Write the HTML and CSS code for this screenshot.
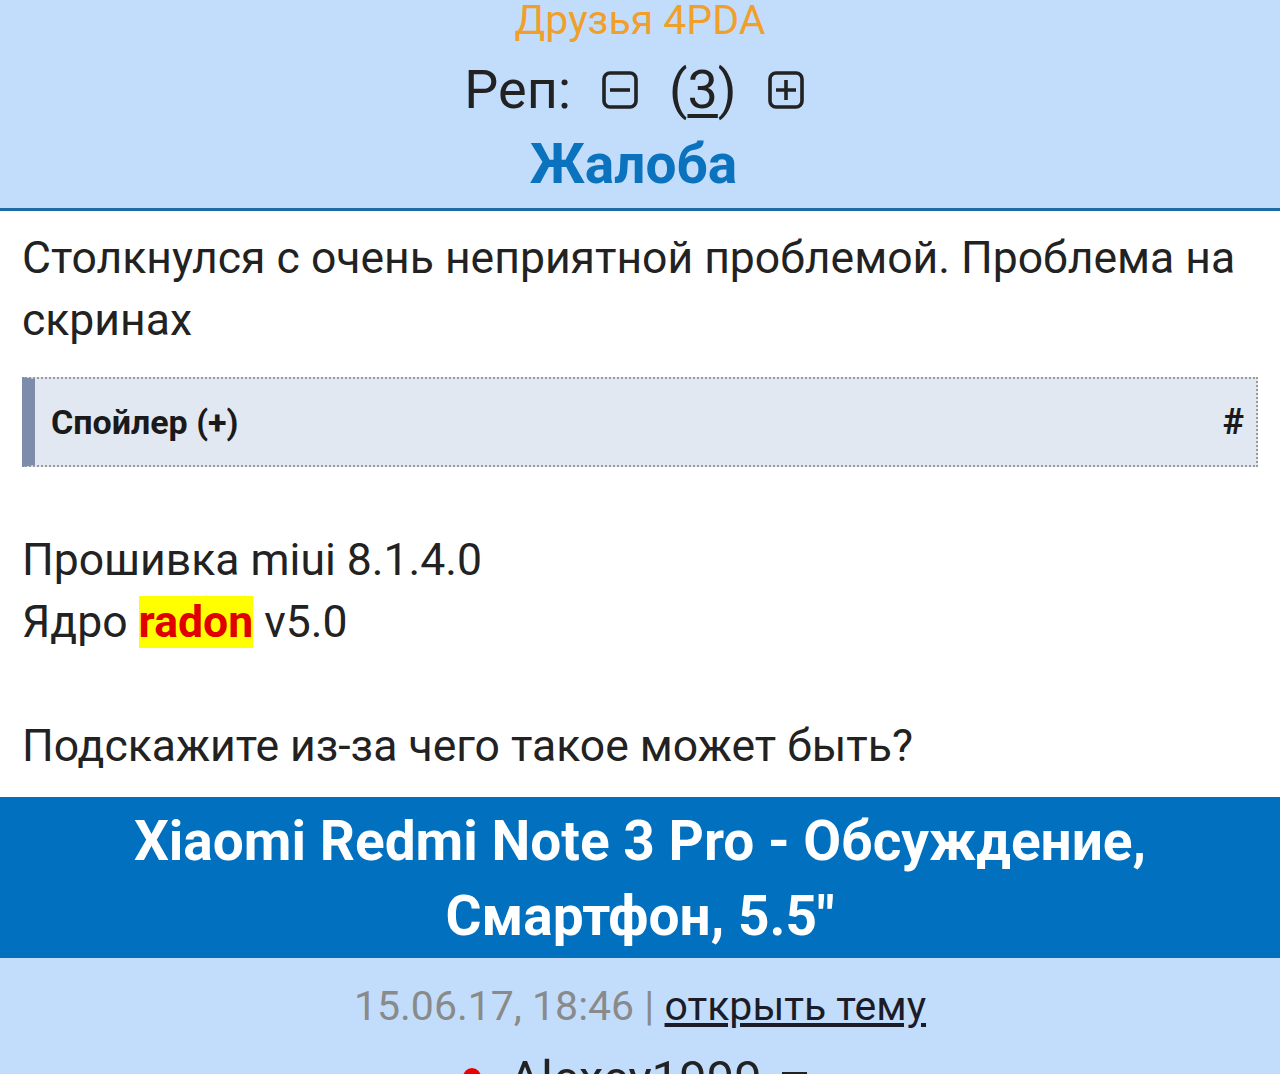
FILE: index.html
```html
<!DOCTYPE html>
<html lang="ru">
  <head>
    <meta charset="UTF-8" />
    <meta name="viewport" content="width=device-width, initial-scale=1.0" />
    <title>4PDA - Xiaomi Redmi Note 3 Pro</title>
    <link rel="stylesheet" href="styles.css">
  </head>
  <body>
    <div class="post-head">
      <div class="group">Друзья 4PDA</div>
      <div class="rep">
        <span>Реп:</span>
        <a class="rep-btn" href="#">
          <svg viewBox="0 0 36 38" width="36" height="38">
            <rect x="2" y="2" width="32" height="34" rx="6" fill="none" stroke="#222" stroke-width="3.6" />
            <path d="M8 19h20" stroke="#222" stroke-width="3.6" />
          </svg>
        </a>
        <span>(<a class="rep-num" href="#">3</a>)</span>
        <a class="rep-btn" href="#">
          <svg viewBox="0 0 36 38" width="36" height="38">
            <rect x="2" y="2" width="32" height="34" rx="6" fill="none" stroke="#222" stroke-width="3.6" />
            <path d="M8 19h20M18 9v20" stroke="#222" stroke-width="3.6" />
          </svg>
        </a>
      </div>
      <a class="report" href="#">Жалоба</a>
    </div>

    <div class="post-body">
      <p>Столкнулся с очень неприятной проблемой. Проблема на скринах</p>
      <div class="spoiler">
        <span class="spoiler-title">Спойлер (+)</span>
        <span class="spoiler-anchor">#</span>
      </div>
      <br />
      <p>
        Прошивка miui 8.1.4.0<br />
        Ядро <b class="mark">radon</b> v5.0<br />
        <br />
        Подскажите из-за чего такое может быть?
      </p>
    </div>

    <div class="topic-title">Xiaomi Redmi Note 3 Pro - Обсуждение, Смартфон, 5.5"</div>

    <div class="topic-meta">
      <div class="when"><span class="date">15.06.17, 18:46 |</span> <a href="#">открыть тему</a></div>
      <div class="author">
        <span class="dot"></span>Alexey1999
        <svg class="menu" viewBox="0 0 25 23" width="25" height="23">
          <path d="M0 2h25M0 11.5h25M0 21h25" stroke="#222" stroke-width="4" />
        </svg>
      </div>
    </div>
  </body>
</html>
```

FILE: styles.css
```css
* {
  box-sizing: border-box;
  margin: 0;
  padding: 0;
}
body {
  font-family: Roboto, "Noto Sans", sans-serif;
  color: #222;
  background: #fff;
  font-size: 44.5px;
  overflow: hidden;
}
a {
  color: inherit;
}
.post-head {
  margin-top: -12px;
  background-color: #c2ddfb;
  border-bottom: 3px solid #1d6aa5;
  text-align: center;
  padding-bottom: 7px;
}
.group {
  color: #f0a02a;
  font-size: 41px;
  line-height: 65px;
}
.rep {
  font-size: 54px;
  line-height: 74px;
  display: flex;
  justify-content: center;
  align-items: center;
  gap: 31px;
  padding-right: 12px;
}
.rep-btn {
  display: inline-flex;
}
.rep-num {
  text-decoration: underline;
  text-decoration-thickness: 4px;
  text-underline-offset: 6px;
}
.report {
  display: block;
  font-weight: bold;
  color: #0b72bd;
  text-decoration: none;
  font-size: 55px;
  line-height: 74px;
  padding-right: 13px;
}
.post-body {
  padding: 16px 22px 20px 22px;
  line-height: 62px;
}
.spoiler {
  margin-top: 26px;
  height: 90px;
  display: flex;
  justify-content: space-between;
  align-items: center;
  background-color: #e2e8f1;
  border: 2px dotted #9a9a9a;
  border-left: 13px solid #7d8cab;
  padding: 0 12px 0 16px;
  font-size: 34px;
  font-weight: bold;
  color: #1a1a1a;
}
.spoiler-anchor {
  font-size: 36px;
}
.mark {
  background-color: #ffff00;
  color: #e00000;
}
.topic-title {
  background-color: #0070bf;
  color: #fff;
  font-weight: bold;
  font-size: 55px;
  line-height: 75px;
  text-align: center;
  padding: 7px 100px 4px 100px;
}
.topic-meta {
  background-color: #c2ddfb;
  text-align: center;
  padding-top: 11px;
  line-height: 74px;
  font-size: 41px;
}
.date {
  color: #8a8a8a;
}
.when a {
  color: #1c1c28;
}
.author {
  font-size: 49px;
  line-height: 72px;
  padding-right: 10px;
}
.dot {
  display: inline-block;
  width: 18px;
  height: 18px;
  border-radius: 50%;
  background: #e00;
  margin-right: 28px;
  vertical-align: 9px;
}
.menu {
  margin-left: 8px;
  vertical-align: baseline;
}
```
